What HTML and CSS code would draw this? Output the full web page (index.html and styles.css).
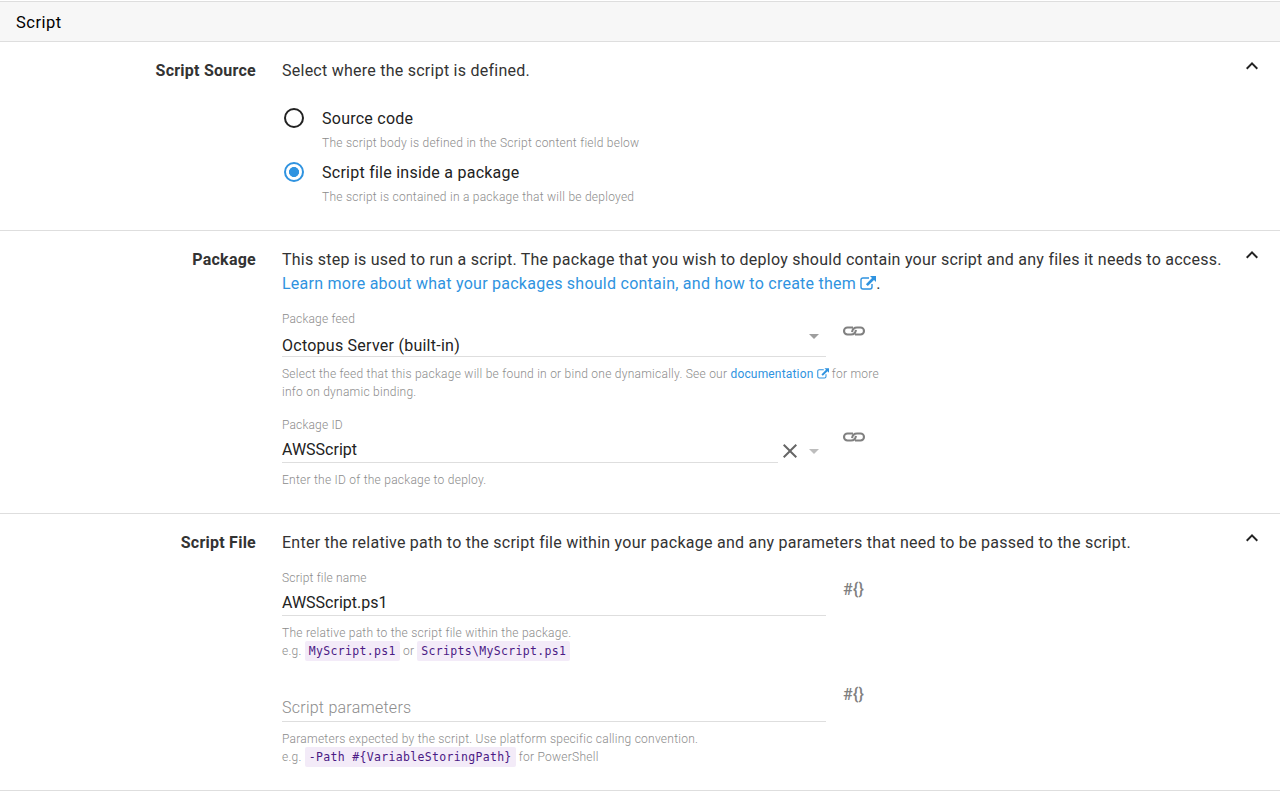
FILE: index.html
```html
<!DOCTYPE html>
<html lang="en">
<head>
<meta charset="utf-8">
<title>Script</title>
<link rel="stylesheet" href="styles.css">
</head>
<body>
<svg class="defs" width="0" height="0">
  <symbol id="chevron" viewBox="0 0 24 24"><path d="M12 8l-6 6 1.41 1.41L12 10.83l4.59 4.58L18 14z"/></symbol>
  <symbol id="caret" viewBox="0 0 24 24"><path d="M7 10l5 5 5-5z"/></symbol>
  <symbol id="clear" viewBox="0 0 24 24"><path d="M19 6.41L17.59 5 12 10.59 6.41 5 5 6.41 10.59 12 5 17.59 6.41 19 12 13.41 17.59 19 19 17.59 13.41 12z"/></symbol>
  <symbol id="chain" viewBox="0 0 24 12"><path d="M11 2.5H5.5a3.5 3.5 0 0 0 0 7H9C11.5 9.5 13.6 8 13.9 4.8M13 9.5H18.5a3.5 3.5 0 0 0 0-7H15C12.5 2.5 10.4 4 10.1 7.2" fill="none" stroke="currentColor" stroke-width="2.1"/></symbol>
  <symbol id="external" viewBox="0 0 16 14"><path d="M9 2H3Q1 2 1 4v7q0 2 2 2h7q2 0 2-2V8" fill="none" stroke="currentColor" stroke-width="1.4"/><path d="M10 0h6v6l-2-2-6.2 6.1-1.9-1.9L12 2z"/></symbol>
</svg>

<header class="panel-title">Script</header>

<section class="section">
  <h2 class="section-name">Script Source</h2>
  <div class="section-body">
    <p class="description">Select where the script is defined.</p>
    <div class="radio-group">
      <div class="option">
        <span class="radio"></span>
        <span class="option-label">Source code</span>
        <p class="help option-help">The script body is defined in the Script content field below</p>
      </div>
      <div class="option">
        <span class="radio radio-on"></span>
        <span class="option-label">Script file inside a package</span>
        <p class="help option-help">The script is contained in a package that will be deployed</p>
      </div>
    </div>
  </div>
  <svg class="icon chevron"><use href="#chevron"/></svg>
</section>

<section class="section">
  <h2 class="section-name">Package</h2>
  <div class="section-body">
    <p class="description">This step is used to run a script. The package that you wish to deploy should contain your script and any files it needs to access. <a class="link">Learn more about what your packages should contain, and how to create them <svg class="external"><use href="#external"/></svg></a>.</p>
    <div class="field">
      <div class="control">
        <div class="label">Package feed</div>
        <div class="input input-select"><span class="value">Octopus Server (built-in)</span><svg class="icon caret"><use href="#caret"/></svg></div>
      </div>
      <svg class="chain"><use href="#chain"/></svg>
      <p class="help">Select the feed that this package will be found in or bind one dynamically. See our <a class="link">documentation <svg class="external external-small"><use href="#external"/></svg></a> for more info on dynamic binding.</p>
    </div>
    <div class="field">
      <div class="control control-lookup">
        <div class="lookup">
          <div class="label">Package ID</div>
          <div class="input"><span class="value value-text">AWSScript</span></div>
        </div>
        <svg class="icon clear"><use href="#clear"/></svg>
        <svg class="icon caret caret-light"><use href="#caret"/></svg>
      </div>
      <svg class="chain"><use href="#chain"/></svg>
      <p class="help">Enter the ID of the package to deploy.</p>
    </div>
  </div>
  <svg class="icon chevron"><use href="#chevron"/></svg>
</section>

<section class="section">
  <h2 class="section-name">Script File</h2>
  <div class="section-body">
    <p class="description">Enter the relative path to the script file within your package and any parameters that need to be passed to the script.</p>
    <div class="field">
      <div class="control">
        <div class="label">Script file name</div>
        <div class="input"><span class="value value-text">AWSScript.ps1</span></div>
      </div>
      <span class="bind">#{}</span>
      <p class="help">The relative path to the script file within the package.<br>e.g. <code>MyScript.ps1</code> or <code>Scripts\MyScript.ps1</code></p>
    </div>
    <div class="field">
      <div class="control">
        <div class="label"></div>
        <div class="input input-empty"><span class="value placeholder">Script parameters</span></div>
      </div>
      <span class="bind bind-empty">#{}</span>
      <p class="help">Parameters expected by the script. Use platform specific calling convention.<br>e.g. <code>-Path #{VariableStoringPath}</code> for PowerShell</p>
    </div>
  </div>
  <svg class="icon chevron"><use href="#chevron"/></svg>
</section>
</body>
</html>
```
FILE: styles.css
```css
* { box-sizing: border-box; }

body {
  margin: 0;
  padding-top: 1px;
  background: #fff;
  color: #333;
  font: 16px/24px Roboto, sans-serif;
  letter-spacing: 0.25px;
}

p, h2 { margin: 0; }
svg { fill: currentColor; }
.defs { display: none; }

.panel-title {
  height: 41px;
  padding: 8px 16px;
  border: solid #dedede;
  border-width: 1px 0;
  background: #f7f7f7;
  color: #000;
  font-size: 16.5px;
  line-height: 25px;
  letter-spacing: 0.5px;
}

.section {
  display: grid;
  grid-template-columns: 256px 944px 24px;
  column-gap: 26px;
  padding: 17px 0 24px;
  border-bottom: 1px solid #dedede;
}
.section-body { width: 944px; }
.section-name {
  font-size: 16px;
  line-height: 24px;
  font-weight: 700;
  text-align: right;
}

.icon { width: 24px; height: 24px; }
.chevron { margin: -5px 0 0 -12px; color: #222; }

.link { color: #2f93e0; }
.external { width: 16px; height: 14px; vertical-align: -1px; }
.external-small { width: 12px; height: 11px; }

.radio-group {
  display: grid;
  row-gap: 9px;
  padding: 24px 0 0;
}
.option {
  display: grid;
  grid-template-columns: 40px 1fr;
  row-gap: 3px;
  color: #222;
}
.radio {
  width: 20px;
  height: 20px;
  margin: 1px 2px 3px;
  border: 2px solid #222;
  border-radius: 50%;
}
.radio-on {
  border-color: #2f93e0;
  background: radial-gradient(circle, #2f93e0 4.7px, transparent 5.3px);
}
.option .option-help { grid-column: 2; margin: 0; }

.field {
  display: grid;
  grid-template-columns: 544px 24px;
  column-gap: 16px;
  margin-top: 14px;
}
.label {
  height: 18px;
  font-size: 12px;
  line-height: 18px;
  font-weight: 300;
  letter-spacing: 0.17px;
  color: #8c8c8c;
}
.input {
  display: flex;
  justify-content: space-between;
  height: 29px;
  padding-top: 4px;
  border-bottom: 1px solid #dedede;
  color: #222;
}
.input-select { padding-top: 6px; }
.input-empty { height: 30px; }
.value-text { letter-spacing: 0; }
.placeholder { font-weight: 300; color: #8c8c8c; }
.caret { color: #9e9e9e; }
.input .caret { margin-top: -10px; }
.caret-light { color: #bdbdbd; }
.control-lookup { display: flex; }
.lookup { width: 496px; }
.clear, .caret-light { margin-top: 23px; }
.clear { color: #666; }

.help {
  grid-column: 1 / -1;
  width: 604px;
  margin-top: 8px;
  font-size: 12px;
  line-height: 18px;
  font-weight: 300;
  color: #8c8c8c;
}
.field + .field { margin-top: 15px; }
.field + .field:has(.input-empty) { margin-top: 14px; }
.help .link { font-weight: 400; letter-spacing: 0.17px; }

code {
  padding: 3px 4px;
  border-radius: 2px;
  background: #f3ebf8;
  color: #4b1a85;
  font: 11.5px/18px "DejaVu Sans Mono", monospace;
  letter-spacing: 0.32px;
}

.chain { width: 24px; height: 12px; margin-top: 15px; color: #808080; }
.bind {
  margin-top: 9px;
  padding-left: 1px;
  font-size: 16px;
  font-weight: 500;
  letter-spacing: 0.3px;
  color: #808080;
}
```
